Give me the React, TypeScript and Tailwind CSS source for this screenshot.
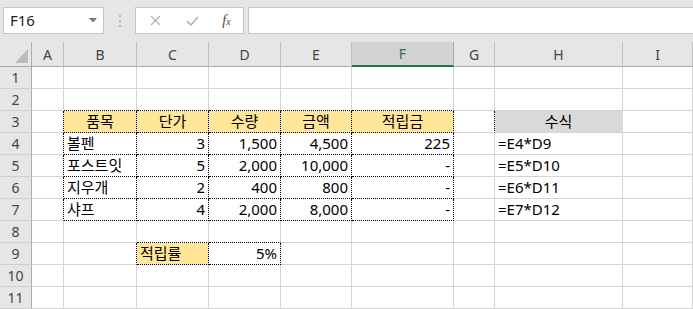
import React from 'react';

// Types
interface CellDef {
  t?: string;
  a?: 'l' | 'r' | 'c';
  bg?: 'y' | 'g';
  br?: boolean; // dotted right border
  bb?: boolean; // dotted bottom border
}

const COLS = ['A', 'B', 'C', 'D', 'E', 'F', 'G', 'H', 'I'];

// rows 1..11, columns A..I
const blank = (): CellDef[] => COLS.map(() => ({}));

const buildRows = (): CellDef[][] => {
  const rows: CellDef[][] = [];
  for (let i = 0; i < 11; i++) rows.push(blank());

  // row 2: top edge of table (B..F)
  for (let c = 1; c <= 5; c++) rows[1][c].bb = true;

  // header row 3
  const heads = ['품목', '단가', '수량', '금액', '적립금'];
  heads.forEach((h, i) => {
    rows[2][i + 1] = { t: h, a: 'c', bg: 'y', br: true, bb: true };
  });
  rows[2][6] = { br: true };
  rows[2][7] = { t: '수식', a: 'c', bg: 'g' };

  const data = [
    ['볼펜', '3', '1,500', '4,500', '225', '=E4*D9'],
    ['포스트잇', '5', '2,000', '10,000', '-', '=E5*D10'],
    ['지우개', '2', '400', '800', '-', '=E6*D11'],
    ['샤프', '4', '2,000', '8,000', '-', '=E7*D12'],
  ];
  data.forEach((d, r) => {
    const row = rows[3 + r];
    row[1] = { t: d[0], a: 'l', br: true, bb: true };
    row[2] = { t: d[1], a: 'r', br: true, bb: true };
    row[3] = { t: d[2], a: 'r', br: true, bb: true };
    row[4] = { t: d[3], a: 'r', br: true, bb: true };
    row[5] = { t: d[4], a: 'r', br: true, bb: true };
    row[7] = { t: d[5], a: 'l' };
  });

  // left edge of table
  for (let r = 2; r <= 6; r++) rows[r][0].br = true;

  // 적립률 box C9:D9
  rows[7][2].bb = true;
  rows[7][3].bb = true;
  rows[8][1].br = true;
  rows[8][2] = { t: '적립률', a: 'l', bg: 'y', br: true, bb: true };
  rows[8][3] = { t: '5%', a: 'r', br: true, bb: true };

  return rows;
};

const ROWS = buildRows();

const cellClass = (c: CellDef): string => {
  const parts = ['h-[22px] border-r border-b flex items-center px-[3px] overflow-visible whitespace-nowrap'];
  parts.push(c.br ? 'border-r-black [border-right-style:dotted]' : c.bg === 'g' ? 'border-r-[#d9d9d9]' : 'border-r-[#d4d4d4]');
  parts.push(c.bb ? 'border-b-black [border-bottom-style:dotted]' : 'border-b-[#d4d4d4]');
  if (c.bg === 'y') parts.push('bg-[#ffe699]');
  else if (c.bg === 'g') parts.push('bg-[#d9d9d9]');
  else parts.push('bg-white');
  if (c.a === 'r') parts.push('justify-end');
  else if (c.a === 'c') parts.push('justify-center');
  return parts.join(' ');
};

const FormulaBar: React.FC = () => (
  <div className="h-[42px] bg-[#e6e6e6] flex items-start pt-[7px] pl-[3px]">
    {/* Name box */}
    <div className="w-[101px] h-[27px] bg-white border border-[#c6c6c6] flex items-center pl-[6px] pr-[6px]">
      <span className="text-[15px] text-[#222] flex-1">F16</span>
      <svg width="8" height="5" viewBox="0 0 8 5">
        <polygon points="0,0 8,0 4,4.5" fill="#777" />
      </svg>
    </div>
    {/* dots */}
    <div className="w-[31px] h-[27px] flex flex-col items-center justify-center gap-[3px]">
      <span className="block w-[2px] h-[2px] bg-[#b5b5b5]" />
      <span className="block w-[2px] h-[2px] bg-[#b5b5b5]" />
      <span className="block w-[2px] h-[2px] bg-[#b5b5b5]" />
    </div>
    {/* buttons */}
    <div className="w-[109px] h-[27px] bg-white border border-[#c6c6c6] flex items-center">
      <div className="w-[38px] flex justify-center">
        <svg width="11" height="11" viewBox="0 0 11 11">
          <path d="M1 1 L10 10 M10 1 L1 10" stroke="#b0b0b0" strokeWidth="1.2" fill="none" />
        </svg>
      </div>
      <div className="w-[36px] flex justify-center">
        <svg width="13" height="10" viewBox="0 0 13 10">
          <path d="M1 5 L5 9 L12 1" stroke="#b0b0b0" strokeWidth="1.5" fill="none" />
        </svg>
      </div>
      <div className="w-[33px] flex justify-center">
        <span className="text-[14px] italic text-[#444] font-['Liberation_Serif',serif] leading-none">
          f<span className="text-[10px]">x</span>
        </span>
      </div>
    </div>
    <div className="ml-[4px] flex-1 h-[27px] bg-white border border-[#c6c6c6] border-r-0" />
  </div>
);

function App() {
  return (
    <div className="w-[693px] h-[309px] overflow-hidden bg-white font-['Noto_Sans','Noto_Sans_CJK_KR',sans-serif] text-black">
      <FormulaBar />

      <div className="grid grid-cols-[32px_32px_73px_72px_72px_71px_102px_41px_128px_70px]">
        {/* corner */}
        <div className="h-[25px] bg-[#e6e6e6] border-r border-b border-[#ababab] flex items-end justify-end pr-[3px] pb-[3px]">
          <svg width="13" height="14" viewBox="0 0 13 14">
            <polygon points="13,0 13,14 0,14" fill="#bcbcbc" />
          </svg>
        </div>
        {COLS.map((c) =>
          c === 'F' ? (
            <div
              key={c}
              className="h-[25px] bg-[#d2d2d2] border-r border-r-[#ababab] border-b-2 border-b-[#217346] flex items-center justify-center text-[14px] text-[#3d6b48]"
            >
              {c}
            </div>
          ) : (
            <div
              key={c}
              className="h-[25px] bg-[#e6e6e6] border-r border-r-[#c0c0c0] border-b border-b-[#ababab] flex items-center justify-center text-[14px] text-[#444]"
            >
              {c}
            </div>
          )
        )}

        {ROWS.map((row, r) => (
          <React.Fragment key={r}>
            <div className="h-[22px] bg-[#e6e6e6] border-r border-r-[#ababab] border-b border-b-[#d0d0d0] flex items-center justify-center text-[14px] text-[#444]">
              {r + 1}
            </div>
            {row.map((c, i) => (
              <div key={i} className={cellClass(c)}>
                {c.t && <span className="text-[15px] leading-none">{c.t}</span>}
              </div>
            ))}
          </React.Fragment>
        ))}
      </div>
    </div>
  );
}

export default App;
